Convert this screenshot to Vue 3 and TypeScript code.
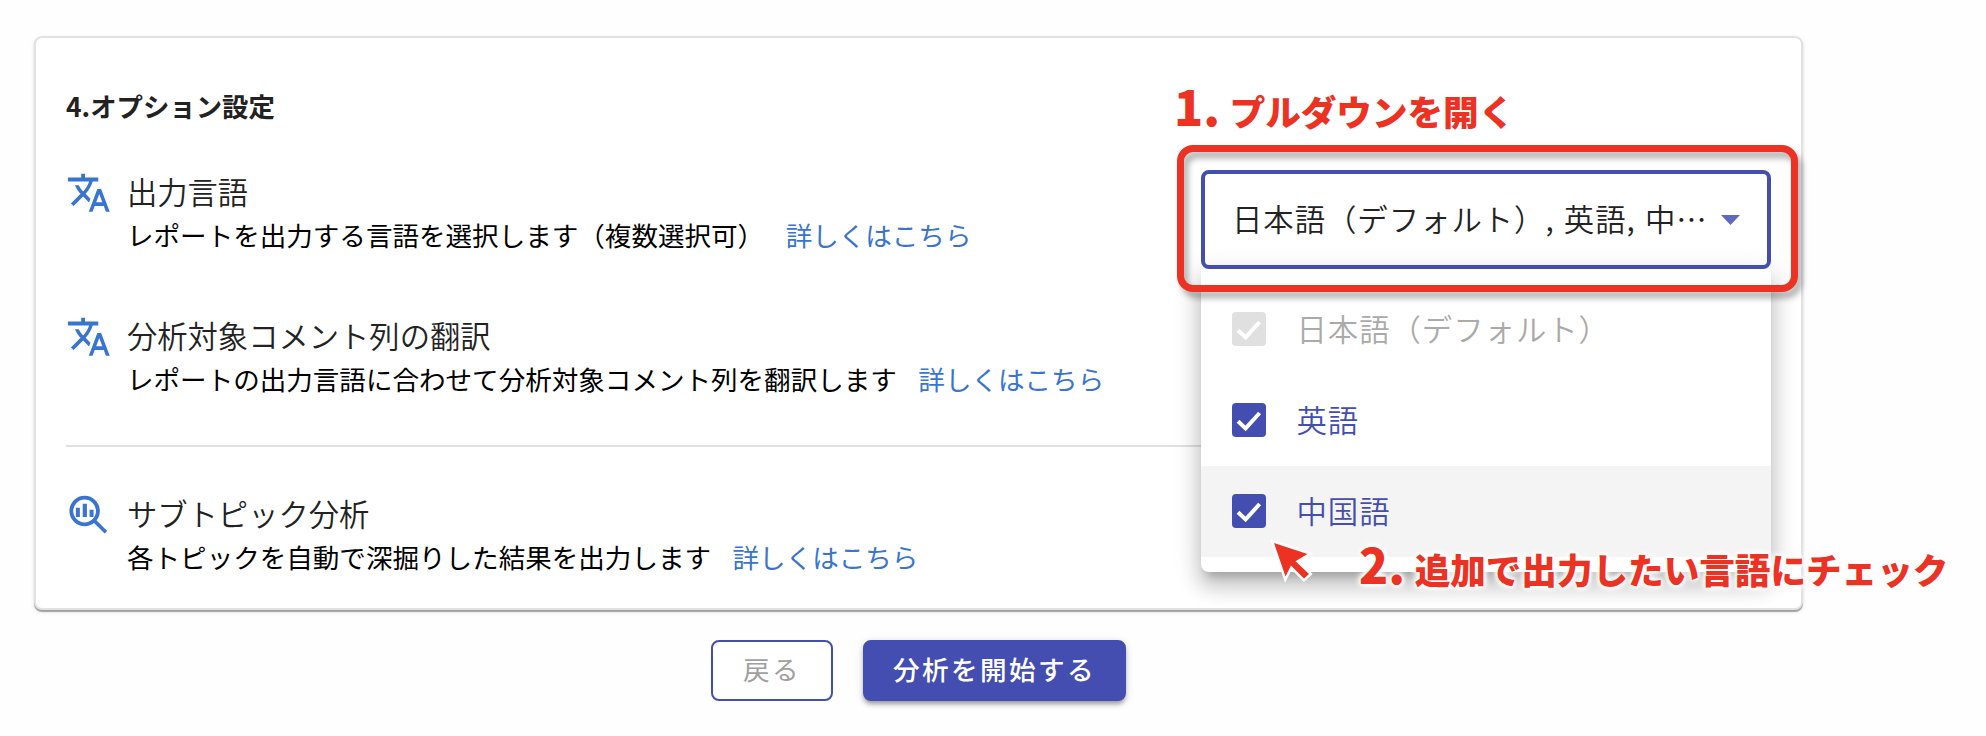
<script setup lang="ts">
interface OptionRow {
  icon: 'translate' | 'analytics'
  title: string
  description: string
  select?: boolean
  divided?: boolean
}

interface Language {
  label: string
  state: 'disabled' | 'checked'
  hovered?: boolean
}

const rows: OptionRow[] = [
  { icon: 'translate', title: '出力言語', description: 'レポートを出力する言語を選択します（複数選択可）', select: true },
  { icon: 'translate', title: '分析対象コメント列の翻訳', description: 'レポートの出力言語に合わせて分析対象コメント列を翻訳します' },
  { icon: 'analytics', title: 'サブトピック分析', description: '各トピックを自動で深掘りした結果を出力します', divided: true },
]

const languages: Language[] = [
  { label: '日本語（デフォルト）', state: 'disabled' },
  { label: '英語', state: 'checked' },
  { label: '中国語', state: 'checked', hovered: true },
]
</script>

<template>
  <main class="page">
    <section class="card">
      <h2 class="heading">4.オプション設定</h2>
      <div v-for="row in rows" :key="row.title" class="row" :class="{ divided: row.divided }">
        <svg v-if="row.icon === 'translate'" class="icon" viewBox="0 0 24 24">
          <path d="M12.87 15.07l-2.54-2.51.03-.03c1.74-1.94 2.98-4.17 3.71-6.53H17V4h-7V2H8v2H1v1.99h11.17C11.5 7.92 10.44 9.75 9 11.35 8.07 10.32 7.3 9.19 6.69 8h-2c.73 1.63 1.73 3.17 2.98 4.56l-5.09 5.02L4 19l5-5 3.11 3.11.76-2.04zM18.5 10h-2L12 22h2l1.12-3h4.75L21 22h2l-4.5-12zm-2.62 7l1.62-4.33L19.12 17h-3.24z" />
        </svg>
        <svg v-else class="icon" viewBox="0 0 24 24">
          <circle cx="9.8" cy="10" r="7" fill="none" stroke="currentColor" stroke-width="2" />
          <path d="M5.2 8.3h2.1v4.9H5.2zM8.8 6.2h2.2v7H8.8zM12.4 9.4h2.1v3.8h-2.1z" />
          <path d="M14.8 15l6.2 6.2" fill="none" stroke="currentColor" stroke-width="2" />
        </svg>
        <div class="body">
          <div class="title">{{ row.title }}</div>
          <div class="description">
            <span>{{ row.description }}</span>
            <a class="link">詳しくはこちら</a>
          </div>
        </div>
        <div v-if="row.select" class="select-wrap">
          <ul class="menu">
            <li v-for="lang in languages" :key="lang.label" class="item" :class="[lang.state, { hovered: lang.hovered }]">
              <span class="checkbox">
                <svg viewBox="0 0 34 34"><path d="M6 18.2l7.6 7.2L27.6 10" /></svg>
              </span>
              <span class="label">{{ lang.label }}</span>
            </li>
          </ul>
          <div class="select">
            <span class="value">日本語（デフォルト）, 英語, 中…</span>
            <svg class="caret" viewBox="0 0 19 10"><path d="M0 0h19L9.5 10z" /></svg>
          </div>
          <div class="frame"></div>
          <p class="note first"><span class="number">1.</span> プルダウンを開く</p>
          <p class="note second"><span class="number">2.</span> 追加で出力したい言語にチェック</p>
          <svg class="cursor" viewBox="-4 -4 44 46">
            <path d="M0 0L33.5 11L21.5 18.3L35 31L30 35.5L17 22.5L11.5 33.5z" />
          </svg>
        </div>
      </div>
    </section>
    <div class="actions">
      <button class="button back">戻る</button>
      <button class="button start">分析を開始する</button>
    </div>
  </main>
</template>

<style>
body {
  margin: 0;
  background: #fefefe;
}
</style>

<style scoped>
.page {
  box-sizing: border-box;
  width: 1986px;
  height: 736px;
  padding: 36px 0 0 34px;
  overflow: hidden;
  font-family: "Noto Sans CJK JP", sans-serif;
}
.card {
  box-sizing: border-box;
  width: 1769px;
  height: 574px;
  padding: 48px 30px 0 30px;
  border: 2px solid #e2e2e2;
  border-radius: 8px;
  background: #fff;
  box-shadow: 0 2px 1px rgba(0, 0, 0, 0.33), 0 2px 5px rgba(0, 0, 0, 0.09);
}
.heading {
  margin: 0 0 43.6px;
  height: 40px;
  font-size: 26.4px;
  line-height: 40px;
  font-weight: 700;
  color: #222;
}
.row {
  display: flex;
  align-items: flex-start;
  box-sizing: border-box;
  height: 144.4px;
}
.row.divided {
  height: auto;
  margin-top: -13.6px;
  padding-top: 45px;
  border-top: 2px solid #e0e0e0;
}
.icon {
  flex: none;
  width: 45.6px;
  height: 45.6px;
  margin-right: 15.4px;
  fill: currentColor;
  color: #3874d0;
}
.body {
  flex: 1;
  margin-top: -2px;
  white-space: nowrap;
}
.title {
  font-size: 30.3px;
  font-weight: 350;
  line-height: 46px;
  color: #222;
}
.description {
  display: flex;
  gap: 21.5px;
  font-size: 26.56px;
  line-height: 41px;
  color: #000;
}
.link {
  color: #3874d0;
}
.select-wrap {
  position: relative;
  width: 570px;
  height: 99px;
  font-size: 30.4px;
  font-weight: 350;
  letter-spacing: 0.95px;
  white-space: nowrap;
}
.select {
  position: relative;
  display: flex;
  align-items: center;
  justify-content: space-between;
  box-sizing: border-box;
  height: 99px;
  padding: 0 27px;
  border: 4px solid #434eb0;
  border-radius: 8px;
  color: #222;
}
.value {
  margin-top: -3px;
  word-spacing: 1.6px;
}
.label {
  margin-top: -3px;
}
.caret {
  width: 19px;
  height: 10px;
  margin-top: 2px;
  fill: #5f6abf;
}
.menu {
  position: absolute;
  top: 99px;
  left: 0;
  box-sizing: border-box;
  width: 570px;
  margin: 0;
  padding: 15px 0;
  list-style: none;
  background: #fff;
  border-radius: 0 0 8px 8px;
  box-shadow: 0 10px 10px -6px rgba(0, 0, 0, 0.2), 0 15px 19px 2px rgba(0, 0, 0, 0.14), 0 6px 27px 4px rgba(0, 0, 0, 0.12);
}
.item {
  display: flex;
  align-items: center;
  gap: 30.5px;
  height: 91.1px;
  padding-left: 31px;
  color: #434eb0;
}
.item.disabled {
  color: #aaa;
}
.item.hovered {
  background: #f4f4f4;
}
.checkbox {
  display: flex;
  width: 34px;
  height: 34px;
  border-radius: 4px;
  background: #434eb0;
}
.disabled .checkbox {
  background: #e0e0e0;
}
.checkbox svg {
  width: 34px;
  height: 34px;
  fill: none;
  stroke: #fff;
  stroke-width: 4;
}
.frame {
  position: absolute;
  left: -24px;
  top: -24.5px;
  box-sizing: border-box;
  width: 621px;
  height: 147px;
  border: 7px solid #ec3323;
  border-radius: 16px;
  filter: drop-shadow(4px 6px 3px rgba(0, 0, 0, 0.32));
}
.note {
  position: absolute;
  margin: 0;
  color: #ec3323;
  font-size: 35.6px;
  font-weight: 900;
  line-height: 60px;
  letter-spacing: 0;
  text-shadow: 0 0 4px #fff, 0 0 4px #fff, 0 0 6px #fff, 0 0 8px #fff, 0 0 10px #fff;
}
.note.first {
  left: -27px;
  top: -95px;
}
.note.second {
  left: 158px;
  top: 363.5px;
}
.number {
  margin-right: 1.4px;
  font-size: 48px;
}
.cursor {
  position: absolute;
  left: 69px;
  top: 369px;
  width: 44px;
  height: 46px;
  fill: #ec3323;
  stroke: #fff;
  stroke-width: 5;
  paint-order: stroke;
}
.actions {
  display: flex;
  justify-content: center;
  gap: 30px;
  width: 1769px;
  margin-top: 30.4px;
}
.button {
  box-sizing: border-box;
  height: 61px;
  padding: 0 0 3px;
  font-family: inherit;
  font-size: 26.6px;
  line-height: 54px;
  letter-spacing: 2.4px;
  border: 2px solid #434eb0;
  border-radius: 8px;
}
.back {
  width: 122px;
  background: #fff;
  color: #a0a0a0;
}
.start {
  width: 263px;
  background: #434eb0;
  color: #fff;
  font-weight: 500;
  box-shadow: 0 4px 4px -1px rgba(0, 0, 0, 0.3), 0 2px 8px rgba(0, 0, 0, 0.16);
}
</style>
